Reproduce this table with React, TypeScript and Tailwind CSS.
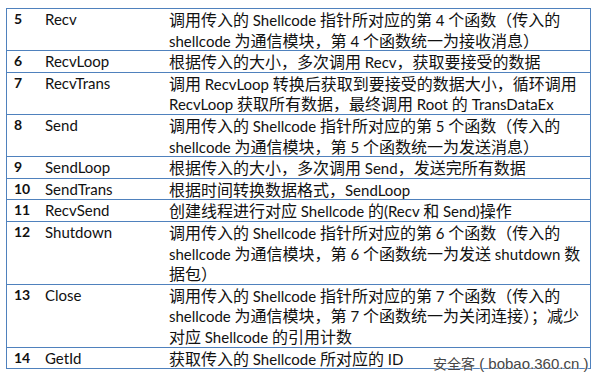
import React from "react";

type Row = { n: string; name: string; lines: string[] };

const rows: Row[] = [
  {
    n: "5",
    name: "Recv",
    lines: [
      "调用传入的 Shellcode 指针所对应的第 4 个函数（传入的",
      "shellcode 为通信模块，第 4 个函数统一为接收消息）",
    ],
  },
  { n: "6", name: "RecvLoop", lines: ["根据传入的大小，多次调用 Recv，获取要接受的数据"] },
  {
    n: "7",
    name: "RecvTrans",
    lines: [
      "调用 RecvLoop 转换后获取到要接受的数据大小，循环调用",
      "RecvLoop 获取所有数据，最终调用 Root 的 TransDataEx",
    ],
  },
  {
    n: "8",
    name: "Send",
    lines: [
      "调用传入的 Shellcode 指针所对应的第 5 个函数（传入的",
      "shellcode 为通信模块，第 5 个函数统一为发送消息）",
    ],
  },
  { n: "9", name: "SendLoop", lines: ["根据传入的大小，多次调用 Send，发送完所有数据"] },
  { n: "10", name: "SendTrans", lines: ["根据时间转换数据格式，SendLoop"] },
  { n: "11", name: "RecvSend", lines: ["创建线程进行对应 Shellcode 的(Recv 和 Send)操作"] },
  {
    n: "12",
    name: "Shutdown",
    lines: [
      "调用传入的 Shellcode 指针所对应的第 6 个函数（传入的",
      "shellcode 为通信模块，第 6 个函数统一为发送 shutdown 数",
      "据包）",
    ],
  },
  {
    n: "13",
    name: "Close",
    lines: [
      "调用传入的 Shellcode 指针所对应的第 7 个函数（传入的",
      "shellcode 为通信模块，第 7 个函数统一为关闭连接）；减少",
      "对应 Shellcode 的引用计数",
    ],
  },
  { n: "14", name: "GetId", lines: ["获取传入的 Shellcode 所对应的 ID"] },
];

function Mixed({ text }: { text: string }) {
  const parts = text.split(/([\u3000-\u9fff\uff00-\uffef]+)/).filter((p) => p.length > 0);
  return (
    <>
      {parts.map((p, i) =>
        /[\u3000-\u9fff\uff00-\uffef]/.test(p) ? (
          <span key={i} className="font-['Noto_Sans_CJK_SC',sans-serif] text-[16px]">
            {p}
          </span>
        ) : (
          <span key={i} className="font-['Lato',sans-serif] text-[15px]">
            {p}
          </span>
        )
      )}
    </>
  );
}

export default function App() {
  return (
    <div className="relative w-[602px] h-[380px] bg-white overflow-hidden">
      <div className="ml-[6px] mt-[8px] w-[585px] border border-[#4f81bd] divide-y divide-[#4f81bd] text-[#111111]">
        {rows.map((r) => (
          <div key={r.n} className="grid grid-cols-[31px_124px_1fr]">
            <div className="pl-[7px] h-[20.6px] leading-[20.6px] font-['Lato',sans-serif] font-bold text-[14px]">
              {r.n}
            </div>
            <div className="pl-[7px] h-[20.6px] leading-[20.6px] font-['Lato',sans-serif] text-[15px]">
              {r.name}
            </div>
            <div className="pl-[7px]">
              {r.lines.map((l, i) => (
                <div key={i} className="h-[20.6px] leading-[20.6px] whitespace-pre">
                  <Mixed text={l} />
                </div>
              ))}
            </div>
          </div>
        ))}
      </div>
      <div className="absolute left-[433px] top-[353px] whitespace-pre leading-[20px] text-[#454545] [text-shadow:0_0_2px_#fff,0_0_1px_#fff,0_0_1px_#fff]">
        <span className="font-['Noto_Sans_CJK_SC',sans-serif] text-[14px]">安全客</span>
        <span className="font-['Liberation_Sans',sans-serif] text-[15px]"> ( bobao.360.cn )</span>
      </div>
    </div>
  );
}
